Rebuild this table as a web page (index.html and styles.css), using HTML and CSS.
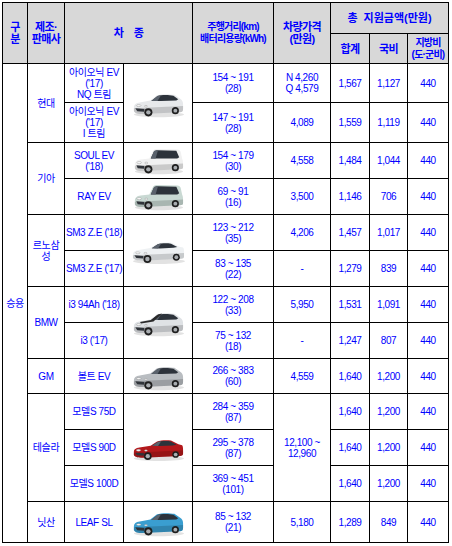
FILE: index.html
```html
<!DOCTYPE html>
<html lang="ko">
<head>
<meta charset="utf-8">
<title>전기차 지원금</title>
<link rel="stylesheet" href="styles.css">
</head>
<body>
<svg class="defs" width="0" height="0" aria-hidden="true">
  <symbol id="hatch" viewBox="0 0 56 30">
    <ellipse cx="29" cy="26.5" rx="26" ry="2.8" fill="#e2e2e2"/>
    <path fill="currentColor" d="M3,19 C3,16 5,14.5 9,14 L20,12 L27,6.5 C31,5 40,5 45,6 L51,10 C53,11 54,13 54,16 L54,21 C54,23 53,24 51,24 L12,26 C7,26 4,25 3,23 Z"/>
    <path fill="#000" opacity=".16" d="M3,20 L54,17.5 L54,21 C54,23 53,24 51,24 L12,26 C7,26 4,25 3,23 Z"/>
    <path fill="#2d333b" d="M21,12.3 L27.5,7.3 C31,6 39,6 44,7 L49,10.5 L47,12 L31,12.5 Z"/>
    <path fill="#5a626c" d="M21,12.3 L27.5,7.3 L31,6.6 L27.5,12.4 Z"/>
    <path fill="#30343a" d="M4.5,20 L14,20.6 L13.5,23.6 L6.5,23 Z"/>
    <ellipse fill="#fafafa" stroke="#8a8a8a" stroke-width=".4" cx="8" cy="17.2" rx="2.4" ry="1"/>
    <ellipse fill="#fafafa" stroke="#8a8a8a" stroke-width=".4" cx="15.5" cy="17.8" rx="1.6" ry=".8"/>
    <circle cx="18" cy="24.2" r="4.2" fill="#1e1e1e"/><circle cx="18" cy="24.2" r="2.3" fill="#a9adb1"/>
    <circle cx="46" cy="22.4" r="3.7" fill="#1e1e1e"/><circle cx="46" cy="22.4" r="2" fill="#a9adb1"/>
  </symbol>
  <symbol id="boxy" viewBox="0 0 56 30">
    <ellipse cx="29" cy="26.5" rx="25" ry="2.8" fill="#e2e2e2"/>
    <path fill="currentColor" d="M4,20 C4,16 6,14.5 10,14 L19,13 L23,4.5 C24,3.5 26,3 28,3 L48,3.5 C50,3.6 51,4.5 51.5,6 L53,13 C54,15 54,17 54,19 L54,22 C54,23.5 53,24 51,24 L12,26 C7,26 4.5,25 4,23 Z"/>
    <path fill="#000" opacity=".16" d="M4,20.5 L54,18 L54,22 C54,23.5 53,24 51,24 L12,26 C7,26 4.5,25 4,23 Z"/>
    <path fill="#2d333b" d="M20.5,13 L24,5.2 C25,4.6 26,4.3 28,4.3 L47,4.8 L50,11.5 L48,13 Z"/>
    <path fill="#5a626c" d="M20.5,13 L24,5.2 L28,4.4 L25.5,13 Z"/>
    <path fill="#30343a" d="M5.5,20 L14,20.6 L13.5,23.6 L7,23 Z"/>
    <ellipse fill="#fafafa" stroke="#8a8a8a" stroke-width=".4" cx="8.5" cy="17.2" rx="2.4" ry="1.1"/>
    <ellipse fill="#fafafa" stroke="#8a8a8a" stroke-width=".4" cx="15.8" cy="17.6" rx="1.6" ry=".9"/>
    <circle cx="18" cy="24.2" r="4.2" fill="#1e1e1e"/><circle cx="18" cy="24.2" r="2.3" fill="#a9adb1"/>
    <circle cx="46" cy="22.4" r="3.7" fill="#1e1e1e"/><circle cx="46" cy="22.4" r="2" fill="#a9adb1"/>
  </symbol>
  <symbol id="sedan" viewBox="0 0 56 30">
    <ellipse cx="29" cy="26.2" rx="27" ry="2.8" fill="#e2e2e2"/>
    <path fill="currentColor" d="M2,19 C2,16.5 4,15 8,14.5 L20,12.5 L27,8 C31,6.5 38,6.3 42,7 L50,11 L54,12 C55,13 55,16 55,18 L55,21 C55,23 54,23.5 52,23.5 L12,25.5 C6,25.5 3,24.5 2,22.5 Z"/>
    <path fill="#000" opacity=".16" d="M2,20 L55,17.5 L55,21 C55,23 54,23.5 52,23.5 L12,25.5 C6,25.5 3,24.5 2,22.5 Z"/>
    <path fill="#2d333b" d="M21.5,12.7 L27.8,8.6 C31,7.5 37,7.3 41.5,8 L48,11.4 L44,12.2 L30,12.8 Z"/>
    <path fill="#5a626c" d="M21.5,12.7 L27.8,8.6 L31.5,7.8 L28,12.8 Z"/>
    <path fill="#30343a" d="M3.5,20 L13,20.6 L12.5,23.4 L5.5,22.8 Z"/>
    <ellipse fill="#fafafa" stroke="#8a8a8a" stroke-width=".4" cx="7" cy="17.4" rx="2.4" ry="1"/>
    <ellipse fill="#fafafa" stroke="#8a8a8a" stroke-width=".4" cx="15" cy="17.8" rx="1.6" ry=".8"/>
    <circle cx="17" cy="23.8" r="4.1" fill="#1e1e1e"/><circle cx="17" cy="23.8" r="2.3" fill="#a9adb1"/>
    <circle cx="47" cy="22" r="3.6" fill="#1e1e1e"/><circle cx="47" cy="22" r="2" fill="#a9adb1"/>
  </symbol>
</svg>

<table class="ev">
  <colgroup>
    <col class="w-cat"><col class="w-maker"><col class="w-model"><col class="w-img">
    <col class="w-range"><col class="w-price"><col class="w-sum"><col class="w-nat"><col class="w-loc">
  </colgroup>
  <thead>
    <tr class="r31">
      <th rowspan="2">구<br>분</th>
      <th rowspan="2">제조·<br>판매사</th>
      <th rowspan="2" colspan="2" class="wide">차 종</th>
      <th rowspan="2" class="tight">주행거리(km)<br>배터리용량(kWh)</th>
      <th rowspan="2">차량가격<br>(만원)</th>
      <th colspan="3" class="total">총 지원금액(만원)</th>
    </tr>
    <tr class="r30">
      <th>합계</th>
      <th>국비</th>
      <th class="tight">지방비<br>(도·군비)</th>
    </tr>
  </thead>
  <tbody>
    <tr class="r39">
      <td rowspan="13">승용</td>
      <td rowspan="2">현대</td>
      <td>아이오닉 EV<br>('17)<br>NQ 트림</td>
      <td rowspan="2" class="img"><svg class="car ioniq"><use href="#hatch"/></svg></td>
      <td>154 ~ 191<br>(28)</td>
      <td>N 4,260<br>Q 4,579</td>
      <td>1,567</td><td>1,127</td><td>440</td>
    </tr>
    <tr class="r40">
      <td>아이오닉 EV<br>('17)<br>I 트림</td>
      <td>147 ~ 191<br>(28)</td>
      <td>4,089</td>
      <td>1,559</td><td>1,119</td><td>440</td>
    </tr>
    <tr class="r36">
      <td rowspan="2">기아</td>
      <td>SOUL EV<br>('18)</td>
      <td class="img"><svg class="car soul"><use href="#boxy"/></svg></td>
      <td>154 ~ 179<br>(30)</td>
      <td>4,558</td>
      <td>1,484</td><td>1,044</td><td>440</td>
    </tr>
    <tr class="r36">
      <td>RAY EV</td>
      <td class="img"><svg class="car ray"><use href="#boxy"/></svg></td>
      <td>69 ~ 91<br>(16)</td>
      <td>3,500</td>
      <td>1,146</td><td>706</td><td>440</td>
    </tr>
    <tr class="r36">
      <td rowspan="2">르노삼<br>성</td>
      <td>SM3 Z.E ('18)</td>
      <td rowspan="2" class="img"><svg class="car sm3"><use href="#sedan"/></svg></td>
      <td>123 ~ 212<br>(35)</td>
      <td>4,206</td>
      <td>1,457</td><td>1,017</td><td>440</td>
    </tr>
    <tr class="r36">
      <td>SM3 Z.E ('17)</td>
      <td>83 ~ 135<br>(22)</td>
      <td>-</td>
      <td>1,279</td><td>839</td><td>440</td>
    </tr>
    <tr class="r36">
      <td rowspan="2">BMW</td>
      <td>i3 94Ah ('18)</td>
      <td rowspan="2" class="img"><svg class="car i3"><use href="#hatch"/><path fill="#2a2a2a" d="M9,14 L20,12 L27,6.5 L31,5.6 L22.5,13.4 L10,15.6 Z"/></svg></td>
      <td>122 ~ 208<br>(33)</td>
      <td>5,950</td>
      <td>1,531</td><td>1,091</td><td>440</td>
    </tr>
    <tr class="r36">
      <td>i3 ('17)</td>
      <td>75 ~ 132<br>(18)</td>
      <td>-</td>
      <td>1,247</td><td>807</td><td>440</td>
    </tr>
    <tr class="r35">
      <td>GM</td>
      <td>볼트 EV</td>
      <td class="img"><svg class="car bolt"><use href="#hatch"/></svg></td>
      <td>266 ~ 383<br>(60)</td>
      <td>4,559</td>
      <td>1,640</td><td>1,200</td><td>440</td>
    </tr>
    <tr class="r36">
      <td rowspan="3">테슬라</td>
      <td>모델S 75D</td>
      <td rowspan="3" class="img"><svg class="car tesla"><use href="#sedan"/></svg></td>
      <td>284 ~ 359<br>(87)</td>
      <td rowspan="3">12,100 ~<br>12,960</td>
      <td>1,640</td><td>1,200</td><td>440</td>
    </tr>
    <tr class="r36">
      <td>모델S 90D</td>
      <td>295 ~ 378<br>(87)</td>
      <td>1,640</td><td>1,200</td><td>440</td>
    </tr>
    <tr class="r36">
      <td>모델S 100D</td>
      <td>369 ~ 451<br>(101)</td>
      <td>1,640</td><td>1,200</td><td>440</td>
    </tr>
    <tr class="r41">
      <td>닛산</td>
      <td>LEAF SL</td>
      <td class="img"><svg class="car leaf"><use href="#hatch"/></svg></td>
      <td>85 ~ 132<br>(21)</td>
      <td>5,180</td>
      <td>1,289</td><td>849</td><td>440</td>
    </tr>
  </tbody>
</table>
</body>
</html>
```

FILE: styles.css
```css
body {
  margin: 0;
  padding: 2px 0 0 2px;
  background: #fff;
}

.defs {
  position: absolute;
  width: 0;
  height: 0;
  overflow: hidden;
}

.ev {
  border-collapse: collapse;
  table-layout: fixed;
  width: 447px;
  font-family: "Liberation Sans", "Noto Sans CJK KR", sans-serif;
  color: #0000ff;
}

.w-cat { width: 25px; }
.w-maker { width: 37px; }
.w-model { width: 59px; }
.w-img { width: 69px; }
.w-range { width: 81px; }
.w-price { width: 57px; }
.w-sum { width: 39px; }
.w-nat { width: 38px; }
.w-loc { width: 41px; }

.ev th,
.ev td {
  border: 1px solid #000;
  padding: 0;
  text-align: center;
  vertical-align: middle;
  white-space: nowrap;
  overflow: hidden;
}

.ev th {
  background: #d8d8d8;
  font-weight: bold;
  font-size: 11px;
  line-height: 12px;
  letter-spacing: -0.6px;
}

.ev th.tight {
  font-size: 10px;
  letter-spacing: -0.8px;
}

.ev th.wide {
  word-spacing: 8px;
}

.ev th.total {
  word-spacing: 3px;
  letter-spacing: 0;
}

.ev td {
  font-size: 10px;
  line-height: 11px;
  letter-spacing: -0.4px;
}

.r31 { height: 31px; }
.r30 { height: 30px; }
.r35 { height: 35px; }
.r36 { height: 36px; }
.r39 { height: 39px; }
.r40 { height: 40px; }
.r41 { height: 41px; }

.car {
  display: block;
  margin: 0 auto;
  width: 54px;
  height: 29px;
}

.ioniq { color: #e7e9eb; }
.soul { color: #f1f1f1; }
.ray { color: #c9d9d3; }
.sm3 { color: #eef1f3; }
.i3 { color: #dfe2e5; }
.bolt { color: #b9bdc1; }
.tesla { color: #b3181b; width: 52px; height: 36px; }
.leaf { color: #3a9ed0; }
```
